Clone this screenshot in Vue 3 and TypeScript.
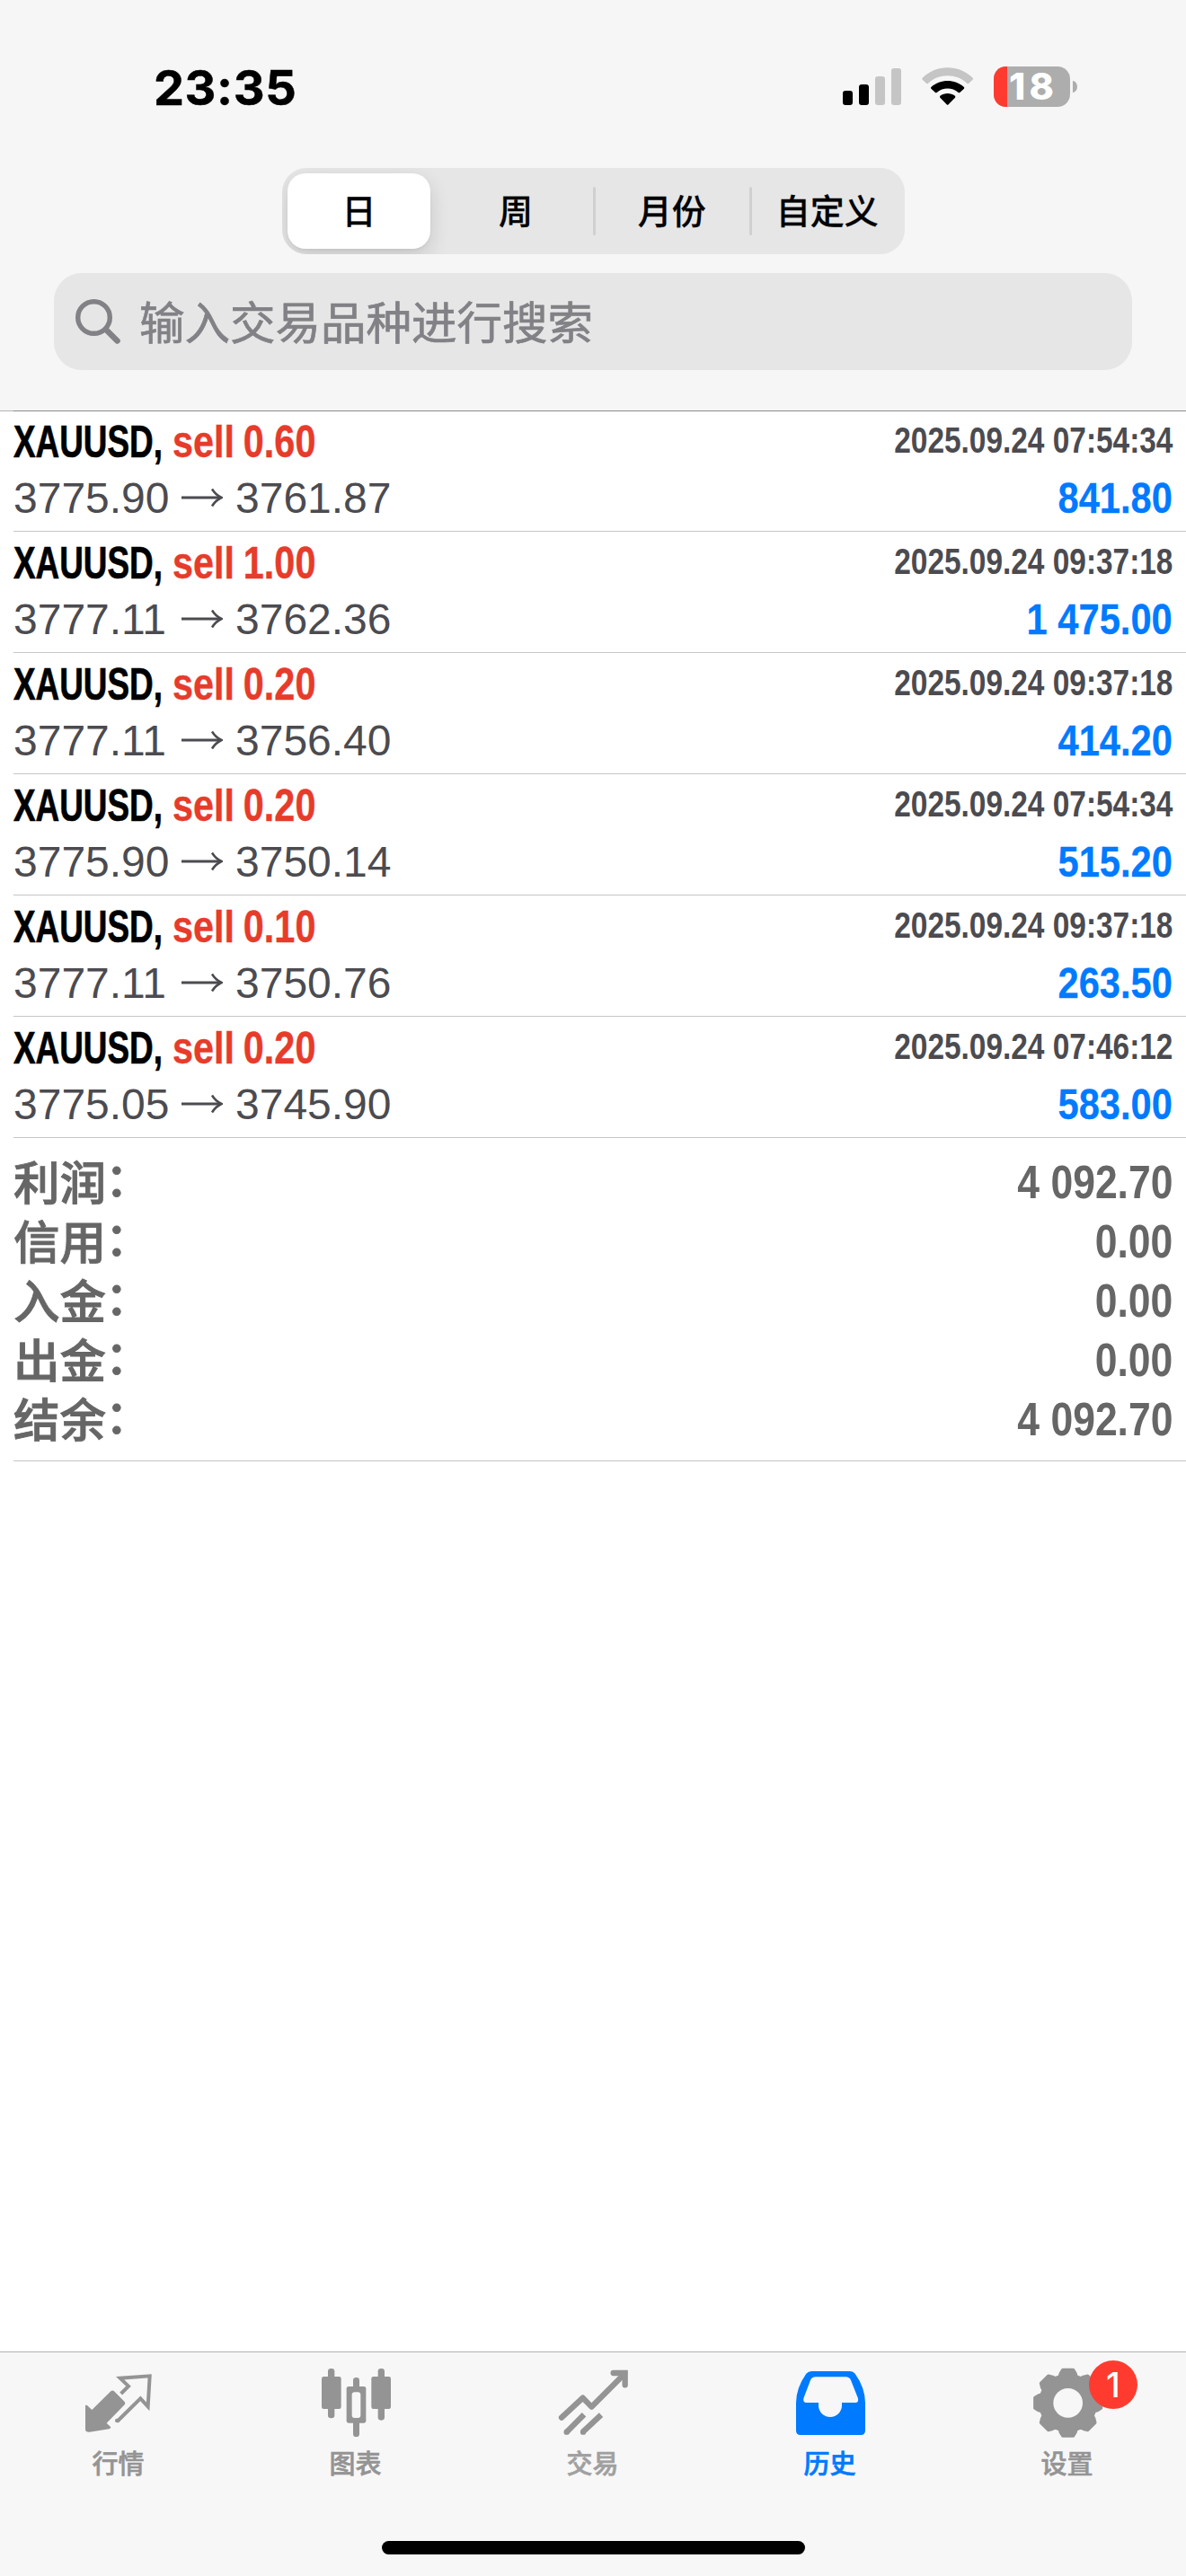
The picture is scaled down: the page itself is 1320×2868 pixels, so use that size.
<script setup lang="ts">
import { ref } from 'vue'

interface Deal {
  symbol: string
  side: string
  open: string
  close: string
  time: string
  profit: string
}

const periods: string[] = ['日', '周', '月份', '自定义']
const activePeriod = ref(0)

const deals: Deal[] = [
  { symbol: 'XAUUSD', side: 'sell 0.60', open: '3775.90', close: '3761.87', time: '2025.09.24 07:54:34', profit: '841.80' },
  { symbol: 'XAUUSD', side: 'sell 1.00', open: '3777.11', close: '3762.36', time: '2025.09.24 09:37:18', profit: '1 475.00' },
  { symbol: 'XAUUSD', side: 'sell 0.20', open: '3777.11', close: '3756.40', time: '2025.09.24 09:37:18', profit: '414.20' },
  { symbol: 'XAUUSD', side: 'sell 0.20', open: '3775.90', close: '3750.14', time: '2025.09.24 07:54:34', profit: '515.20' },
  { symbol: 'XAUUSD', side: 'sell 0.10', open: '3777.11', close: '3750.76', time: '2025.09.24 09:37:18', profit: '263.50' },
  { symbol: 'XAUUSD', side: 'sell 0.20', open: '3775.05', close: '3745.90', time: '2025.09.24 07:46:12', profit: '583.00' },
]

const totals = [
  { label: '利润', value: '4 092.70' },
  { label: '信用', value: '0.00' },
  { label: '入金', value: '0.00' },
  { label: '出金', value: '0.00' },
  { label: '结余', value: '4 092.70' },
]

// Outline of the eight-tooth settings gear, as [angle offset, radius] per tooth
const toothProfile: [number, number][] = [
  [-17.5, 93],
  [-14.5, 101],
  [-9, 112],
  [9, 112],
  [14.5, 101],
  [17.5, 93],
]
const gearPoints = Array.from({ length: 8 }, (_, i) =>
  toothProfile
    .map(([offset, r]) => {
      const a = ((i * 45 + offset) * Math.PI) / 180
      return `${(266 + r * Math.sin(a)).toFixed(1)},${(226 - r * Math.cos(a)).toFixed(1)}`
    })
    .join(' '),
).join(' ')
</script>

<template>
  <div class="screen">
    <header class="header">
      <div class="status">
        <span class="clock">23:35</span>
        <div class="indicators">
          <svg class="signal" viewBox="81 72 195 135">
            <rect x="81" y="153" width="33" height="48" rx="9" />
            <rect x="135" y="132" width="33" height="69" rx="9" />
            <rect x="189" y="105" width="33" height="96" rx="9" fill="#c5c5c5" />
            <rect x="243" y="78" width="33" height="123" rx="9" fill="#c5c5c5" />
          </svg>
          <svg class="wifi" viewBox="345 72 172 135">
            <path fill="#c5c5c5" d="M347 110C394 64 468 64 515 110Q518 113 515 116L501 129Q499 131 496 128C460 94 402 94 366 128Q363 131 361 129L347 116Q344 113 347 110Z" />
            <path d="M376 141C407 113 455 113 486 141Q488 143 486 146L472 159Q470 161 467 159C446 141 416 141 395 159Q392 161 390 159L376 146Q374 143 376 141Z" />
            <path d="M406 170C421 159 441 159 456 170Q458 173 456 176L434 199Q431 202 428 199L406 176Q404 173 406 170Z" />
          </svg>
          <svg class="battery" viewBox="585 72 280 135">
            <rect x="585" y="72" width="255" height="135" rx="42" fill="#adadad" />
            <path fill="#ff3b30" d="M630 72H627C602 72 585 90 585 114V165C585 189 602 207 627 207H630Z" />
            <path fill="#adadad" d="M849 119C859 122 864 129 864 139.500S859 157 849 160Z" />
            <text x="711" y="184" text-anchor="middle" textLength="150" class="charge">18</text>
          </svg>
        </div>
      </div>

      <div class="segments">
        <button
          v-for="(p, i) in periods"
          :key="p"
          class="segment"
          :class="{ active: i === activePeriod, divided: i > 1 }"
          @click="activePeriod = i"
        >{{ p }}</button>
      </div>

      <div class="search">
        <svg class="lens" viewBox="0 0 50 50" fill="none" stroke="#818186" stroke-linecap="round">
          <circle cx="20.500" cy="20.500" r="17.800" stroke-width="5.400" />
          <path d="M34 34L46.500 46.500" stroke-width="6.600" />
        </svg>
        <span>输入交易品种进行搜索</span>
      </div>
    </header>

    <main class="content">
      <article v-for="(d, i) in deals" :key="i" class="deal">
        <div class="line top">
          <div class="title">
            <span class="symbol">{{ d.symbol }},</span>
            <span class="side">{{ d.side }}</span>
          </div>
          <span class="time">{{ d.time }}</span>
        </div>
        <div class="line bottom">
          <div class="prices">
            <span class="price">{{ d.open }}</span>
            <svg class="arrow" viewBox="0 0 46 24" fill="none" stroke="#4b4b50">
              <path d="M0 12H44" stroke-width="2.900" />
              <path d="M34 2.500Q38 9 44.500 12Q38 15 34 21.500" stroke-width="2.500" />
            </svg>
            <span class="price">{{ d.close }}</span>
          </div>
          <span class="profit">{{ d.profit }}</span>
        </div>
      </article>

      <section class="totals">
        <div v-for="t in totals" :key="t.label" class="total">
          <span class="label">{{ t.label }}<span class="colon">：</span></span>
          <span class="value">{{ t.value }}</span>
        </div>
      </section>
    </main>

    <footer class="footer">
      <nav class="tabs">
        <a class="tab">
          <svg class="icon" viewBox="84 90 264 264">
            <path fill="#949494" d="M105 234Q110 232 114 237L127 249L190 187Q196 182 201 187L236 222Q240 227 236 232L176 293L190 307Q190 312 184 313L119 323Q105 324 105 314Z" />
            <path fill="none" stroke="#949494" stroke-width="12" stroke-linejoin="miter" d="M224 195L249 170L221 143L320 136L314 238L289 211L211 288" />
            <circle cx="211" cy="285" r="7" fill="#949494" />
          </svg>
          <span>行情</span>
        </a>
        <a class="tab">
          <svg class="icon" viewBox="876 90 264 264" fill="#949494">
            <rect x="894" y="138" width="65" height="108" rx="7" />
            <rect x="915" y="111" width="22" height="166" rx="10" />
            <rect x="1060" y="138" width="65" height="108" rx="7" />
            <rect x="1082" y="111" width="22" height="173" rx="10" />
            <rect x="999" y="141" width="21" height="198" rx="10" />
            <rect x="977" y="171" width="65" height="122" rx="7" />
            <rect x="995" y="190" width="29" height="86" rx="9" fill="#f7f7f7" />
          </svg>
          <span>图表</span>
        </a>
        <a class="tab">
          <svg class="icon" viewBox="108 90 264 264" fill="none" stroke="#949494" stroke-width="19">
            <path stroke-linecap="round" stroke-linejoin="round" d="M135 275L206 209L235 239L345 129" />
            <path stroke-linecap="round" d="M308 126H347V166" />
            <path d="M210 265L152 323M267 266L206 323" />
            <circle cx="152" cy="323" r="9.500" fill="#949494" stroke="none" />
            <circle cx="207" cy="323" r="9.500" fill="#949494" stroke="none" />
          </svg>
          <span class="light">交易</span>
        </a>
        <a class="tab current">
          <svg class="icon" viewBox="900 90 264 264">
            <path fill="#007aff" fill-rule="evenodd" d="M970 120H1098Q1109 120 1115 128Q1149 176 1149 226V318Q1149 333 1134 333H933Q918 333 918 318V226Q918 176 952 128Q959 120 970 120ZM983 139Q971 139 966 150L943 211Q940 225 953 225H993V234C993 256 1010 273 1032 273S1071 256 1071 234V225H1116Q1128 225 1125 211L1101 150Q1096 139 1084 139Z" />
          </svg>
          <span>历史</span>
        </a>
        <a class="tab">
          <svg class="icon" viewBox="132 90 264 264">
            <polygon :points="gearPoints" fill="#949494" stroke="#949494" stroke-width="10" stroke-linejoin="round" />
            <circle cx="266" cy="226" r="49" fill="#f7f7f7" />
          </svg>
          <i class="badge">1</i>
          <span>设置</span>
        </a>
      </nav>
      <div class="home"></div>
    </footer>
  </div>
</template>

<style>
body {
  margin: 0;
  background: #fff;
}
</style>

<style scoped>
.screen {
  display: flex;
  flex-direction: column;
  width: 1320px;
  height: 2868px;
  overflow: hidden;
  background: #fff;
  font-family: 'Liberation Sans', 'Noto Sans CJK SC', sans-serif;
}

.header {
  position: relative;
  box-sizing: border-box;
  height: 457px;
  padding: 67px 60px 0;
  background: #f6f6f6;
}
.header::after {
  content: '';
  position: absolute;
  left: 0;
  right: 0;
  bottom: -1px;
  height: 1px;
  background: linear-gradient(90deg, #b3b3b3 15px, #8b8b8d 15px);
}
.status {
  display: flex;
  justify-content: space-between;
  height: 60px;
  padding: 0 61px 0 111px;
}
.clock {
  font: 700 54px/62px Inter, sans-serif;
  letter-spacing: 0.6px;
  -webkit-text-stroke: 0.5px currentColor;
}
.indicators {
  display: flex;
  margin-top: 7px;
}
.indicators svg {
  height: 45px;
  overflow: visible;
}
.signal {
  width: 65px;
}
.wifi {
  width: 57.300px;
  margin: 0 22.700px 0 23px;
}
.battery {
  width: 93.300px;
}
.charge {
  fill: #fff;
  font: 800 124px Inter, sans-serif;
}

.segments {
  display: grid;
  grid-template-columns: 173px 174px 173.500px 172.500px;
  box-sizing: border-box;
  width: 693px;
  height: 96px;
  margin: 60px 0 0 254px;
  border-radius: 27px;
  background: #e6e6e6;
  overflow: hidden;
}
.segment {
  position: relative;
  padding: 0 0 4px;
  border: 0;
  background: none;
  color: #000;
  font: 500 38px/1 'Noto Sans CJK SC', sans-serif;
  -webkit-text-stroke: 0.3px currentColor;
}
.segment.active {
  width: 159px;
  height: 84px;
  margin: 6px 0 0 6px;
  border-radius: 20px;
  background: #fff;
  box-shadow: 0 8px 22px rgba(0, 0, 0, 0.14), 0 2px 3px rgba(0, 0, 0, 0.04);
}
.segment.divided::before {
  content: '';
  position: absolute;
  left: -1px;
  top: 21px;
  width: 3px;
  height: 54px;
  border-radius: 2px;
  background: #d0d0d3;
}

.search {
  display: flex;
  align-items: center;
  box-sizing: border-box;
  height: 108px;
  margin-top: 21px;
  padding-left: 24px;
  border-radius: 31px;
  background: #e6e6e6;
  color: #818186;
  font: 400 50.500px/100px 'Noto Sans CJK SC', sans-serif;
  -webkit-text-stroke: 0.7px currentColor;
}
.search span {
  padding-bottom: 5px;
}
.lens {
  width: 50px;
  height: 50px;
  margin: 0 21px 1px 0;
}

.content {
  flex: 1;
}
.deal {
  box-sizing: border-box;
  height: 135px;
  margin-left: 15px;
  padding-right: 15px;
  border-bottom: 1px solid #c6c6c8;
}
.line {
  display: flex;
  justify-content: space-between;
  white-space: nowrap;
}
.top {
  height: 68px;
  line-height: 69px;
}
.bottom {
  height: 58px;
  line-height: 59px;
}
.title,
.prices {
  display: flex;
}
.symbol,
.side {
  font-size: 49.500px;
  font-weight: 700;
  transform-origin: left;
}
.symbol {
  width: 176.500px;
  transform: scaleX(0.745);
  -webkit-text-stroke: 0.7px currentColor;
}
.side {
  color: #e73b2b;
  word-spacing: -2px;
  transform: scaleX(0.836);
  -webkit-text-stroke: 0.4px currentColor;
}
.time {
  color: #4b4b50;
  font-size: 40px;
  font-weight: 700;
  line-height: 67px;
  transform: scaleX(0.835);
  transform-origin: right;
}
.price {
  color: #4b4b50;
  font-size: 48px;
}
.price:first-child {
  width: 173px;
}
.arrow {
  width: 46px;
  height: 24px;
  margin: 17px 14px 0;
}
.profit {
  color: #007aff;
  font-size: 49px;
  font-weight: 700;
  transform: scaleX(0.85);
  transform-origin: right;
  -webkit-text-stroke: 0.3px currentColor;
}

.totals {
  margin-left: 15px;
  padding: 16px 15px 13px 0;
  border-bottom: 1px solid #c6c6c8;
  color: #666;
}
.total {
  display: flex;
  justify-content: space-between;
  height: 66px;
  line-height: 66px;
}
.label {
  font: 500 51.500px/61px 'Noto Sans CJK SC', sans-serif;
  -webkit-text-stroke: 0.9px currentColor;
}
.colon {
  position: relative;
  top: -4px;
  left: -1px;
}
.value {
  font-size: 52px;
  font-weight: 700;
  transform: scaleX(0.855);
  transform-origin: right;
}

.footer {
  box-sizing: border-box;
  height: 250px;
  border-top: 1px solid #b2b2b2;
  background: #f7f7f7;
}
.tabs {
  display: grid;
  grid-template-columns: repeat(5, 1fr);
  height: 210px;
}
.tab {
  position: relative;
  display: flex;
  flex-direction: column;
  align-items: center;
  padding-top: 11px;
  color: #949494;
  font: 500 29px/40px 'Noto Sans CJK SC', sans-serif;
}
.icon {
  width: 88px;
  height: 88px;
}
.tab span {
  margin: 3px 0 0 -1px;
  -webkit-text-stroke: 0.6px currentColor;
}
.tab .light {
  color: #a0a0a0;
}
.tab.current {
  color: #007aff;
}
.badge {
  position: absolute;
  left: 156px;
  top: 9px;
  width: 54px;
  height: 54px;
  border-radius: 50%;
  background: #ff3b30;
  color: #fff;
  font: 500 38px/54px Inter, sans-serif;
  text-align: center;
}
.home {
  width: 471px;
  height: 15px;
  margin: 0 auto;
  border-radius: 8px;
  background: #000;
}
</style>
